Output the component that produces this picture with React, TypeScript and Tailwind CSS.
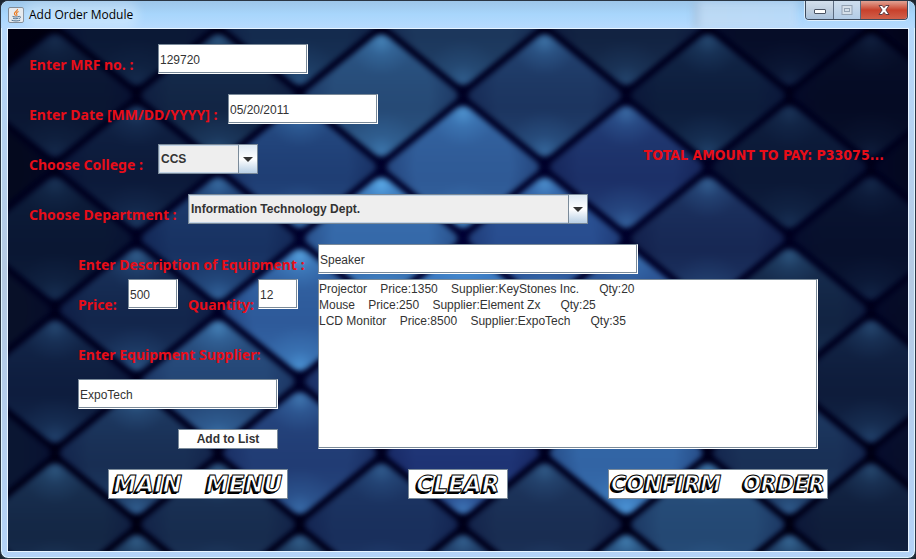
import type { InputHTMLAttributes, ReactNode, SelectHTMLAttributes } from "react";

type Tile = [col: number, row: number, fill: string, glow: number];

const STEP_X = 81.6;
const STEP_Y = 71.5;

const tiles: Tile[] = [
  [1, 0, "#0b1936", 0.12], [3, 0, "#142b4e", 0.3], [5, 0, "#1c375c", 0.35], [7, 0, "#122342", 0.25], [9, 0, "#060d28", 0.12], [11, 0, "#02041a", 0],
  [0, 1, "#0a1632", 0.12], [2, 1, "#122544", 0.3], [4, 1, "#264a76", 0.5], [6, 1, "#1c3560", 0.45], [8, 1, "#0d1d3c", 0.25], [10, 1, "#050b24", 0.1],
  [-1, 2, "#04091e", 0], [1, 2, "#0c1a3a", 0.2], [3, 2, "#1f3e74", 0.5], [5, 2, "#2f5a96", 0.6], [7, 2, "#1c3068", 0.4], [9, 2, "#0b1836", 0.15], [11, 2, "#030820", 0],
  [0, 3, "#0a1733", 0.15], [2, 3, "#183262", 0.4], [4, 3, "#3568a8", 0.85], [6, 3, "#284c8e", 0.6], [8, 3, "#172854", 0.35], [10, 3, "#07102c", 0.12],
  [-1, 4, "#081028", 0], [1, 4, "#13264c", 0.35], [3, 4, "#2e5a9a", 0.75], [5, 4, "#3a76be", 0.9], [7, 4, "#2a5090", 0.5], [9, 4, "#122443", 0.3], [11, 4, "#050b25", 0.1],
  [0, 5, "#0e1d3e", 0.25], [2, 5, "#244574", 0.5], [4, 5, "#213c74", 0.4], [6, 5, "#2a4f90", 0.6], [8, 5, "#193056", 0.3], [10, 5, "#0e1c3b", 0.25],
  [-1, 6, "#0a1632", 0], [1, 6, "#182e53", 0.4], [3, 6, "#213c74", 0.45], [5, 6, "#1e3374", 0.6], [7, 6, "#3264a4", 0.8], [9, 6, "#193056", 0.35], [11, 6, "#070e2a", 0.1],
  [0, 7, "#142745", 0.3], [2, 7, "#172c4e", 0.3], [4, 7, "#192f5c", 0.3], [6, 7, "#192d52", 0.3], [8, 7, "#244873", 0.4], [10, 7, "#0f1d3a", 0.25],
  [-1, 8, "#0c1730", 0.1], [1, 8, "#132542", 0.35], [3, 8, "#152848", 0.35], [5, 8, "#172b50", 0.35], [7, 8, "#1c3a60", 0.5], [9, 8, "#152a4a", 0.4], [11, 8, "#0a142e", 0.1],
];

const DIAMOND = "M-8 -59 Q0 -65 8 -59 L74 -6 Q80 0 74 6 L8 59 Q0 65 -8 59 L-74 6 Q-80 0 -74 -6 Z";

function QuiltedBackground() {
  return (
    <svg
      aria-hidden="true"
      className="absolute inset-0 h-full w-full"
      viewBox="8 29 900 522"
      preserveAspectRatio="xMidYMid slice"
    >
      <defs>
        <filter id="soft" x="-10%" y="-10%" width="120%" height="120%" colorInterpolationFilters="sRGB">
          <feGaussianBlur stdDeviation="2" />
        </filter>
        <radialGradient id="base" cx="50%" cy="45%" r="65%">
          <stop offset="0" stopColor="#02033c" />
          <stop offset="0.6" stopColor="#010220" />
          <stop offset="1" stopColor="#000010" />
        </radialGradient>
        <radialGradient id="shade" cx="0" cy="0" r="80" gradientUnits="userSpaceOnUse">
          <stop offset="0.6" stopColor="#020430" stopOpacity="0" />
          <stop offset="1" stopColor="#020430" stopOpacity="0.3" />
        </radialGradient>
        <radialGradient id="glint" cx="0" cy="-54" r="34" gradientUnits="userSpaceOnUse">
          <stop offset="0" stopColor="#6ac4ff" stopOpacity="0.8" />
          <stop offset="0.4" stopColor="#58aef0" stopOpacity="0.35" />
          <stop offset="1" stopColor="#4f9ee0" stopOpacity="0" />
        </radialGradient>
        <radialGradient id="glintLow" cx="0" cy="56" r="40" gradientUnits="userSpaceOnUse">
          <stop offset="0" stopColor="#5cb4f8" stopOpacity="0.7" />
          <stop offset="0.4" stopColor="#4f9ee0" stopOpacity="0.3" />
          <stop offset="1" stopColor="#4f9ee0" stopOpacity="0" />
        </radialGradient>
        <linearGradient id="sheen" x1="0" y1="0" x2="0" y2="1">
          <stop offset="0" stopColor="#4f9ee0" stopOpacity="0.35" />
          <stop offset="0.45" stopColor="#4288c8" stopOpacity="0.06" />
          <stop offset="0.6" stopColor="#4288c8" stopOpacity="0" />
          <stop offset="1" stopColor="#4a94d6" stopOpacity="0.4" />
        </linearGradient>
      </defs>
      <rect x="8" y="29" width="900" height="522" fill="url(#base)" />
      {tiles.map(([col, row, fill, glow]) => (
        <g key={`${col}-${row}`} transform={`translate(${55 + col * STEP_X} ${24 + row * STEP_Y})`}>
          <g filter="url(#soft)">
            <path d={DIAMOND} fill={fill} />
            <path d={DIAMOND} fill="url(#shade)" />
            <path d={DIAMOND} fill="url(#sheen)" opacity={glow} />
            <path d={DIAMOND} fill="url(#glint)" opacity={glow} />
            <path d={DIAMOND} fill="url(#glintLow)" opacity={glow} />
            <path d={DIAMOND} fill="none" stroke="#010326" strokeWidth="6" strokeOpacity="0.35" />
          </g>
        </g>
      ))}
    </svg>
  );
}

function JavaIcon() {
  return (
    <svg aria-hidden="true" className="size-4" viewBox="0 0 16 16" fill="none">
      <rect x="0.5" y="0.5" width="15" height="15" rx="1.5" fill="#e6eaee" stroke="#7f8b98" />
      <path d="M9.5 2C10 4 6.2 4.8 6.4 6.6c.1 1 1.2 1.4 1.2 2.2M10.6 4.6C8.6 5.4 8 6.2 8.8 7.2c.5.7.2 1.2-.3 1.7" stroke="#e8761a" strokeWidth="1.1" />
      <path d="M4.500 9.400c1.600.8 5 .8 6.600 0M5 11.200c1.500.7 4 .7 5.400 0M3.600 13.200c2.500 1 6.500 1 8.600 0M11.200 9.400c1.800-.3 1.800 1.600-.3 2.200" stroke="#4b6f90" strokeWidth="1" />
    </svg>
  );
}

function TitleBar() {
  const button = "flex h-[18px] items-center justify-center";
  return (
    <header className="flex h-[27px] items-start overflow-hidden rounded-t-lg bg-linear-to-b from-[#9dc6ea] via-[#a8d6fc] to-[#b6dafe] px-[7px]">
      <div className="flex h-[27px] flex-1 items-center gap-[5px]">
        <JavaIcon />
        <h1 className="rounded-full bg-white/25 font-['Open_Sans','Noto_Sans',sans-serif] text-xs leading-4 text-black shadow-[0_0_10px_6px_rgba(255,255,255,0.25)]">
          Add Order Module
        </h1>
      </div>
      <div className="mr-2 h-[27px] w-[104px] bg-linear-to-r from-[#9fb4cd] via-[#c9dcf0] via-10% to-[#c3dcf6] opacity-60 blur-[3px]" />
      <div className="flex overflow-hidden rounded-b border border-t-0 border-[#3d4a5c] shadow-[0_0_0_1px_rgba(255,255,255,0.6)]">
        <button type="button" aria-label="Minimize" className={`${button} w-7 border-r border-[#5b6b80] bg-linear-to-b from-[#d3dfec] via-[#c0cfdf] to-[#a9c2dc]`}>
          <svg className="h-3 w-3" viewBox="0 0 12 12"><rect x="0.5" y="5.500" width="11" height="4" rx="0.5" fill="#fff" stroke="#4a5362" /></svg>
        </button>
        <button type="button" aria-label="Maximize" disabled className={`${button} w-[27px] border-r border-[#5b6b80] bg-linear-to-b from-[#cfdeed] to-[#b3cce6]`}>
          <svg className="h-3 w-3" viewBox="0 0 12 12" fill="none"><rect x="1" y="1.500" width="10" height="9" fill="#d5dfe9" stroke="#93a2b3" /><rect x="3.500" y="4.500" width="5" height="3" stroke="#93a2b3" /></svg>
        </button>
        <button type="button" aria-label="Close" className={`${button} w-[46px] bg-linear-to-b from-[#e0a294] via-[#c8402b] to-[#d0604a]`}>
          <svg className="h-3 w-4" viewBox="0 0 16 12"><path d="M3 1.500h3.200L8 3.700l1.800-2.200H13L9.900 6l3.100 4.500H9.800L8 8.300l-1.800 2.200H3L6.100 6z" fill="#fff" stroke="#50323a" strokeWidth="0.9" /></svg>
        </button>
      </div>
    </header>
  );
}

const bevel =
  "rounded-none border border-t-[#7a8a99] border-l-[#7a8a99] border-r-white border-b-white bg-white text-xs font-normal text-[#333] shadow-[inset_-1px_-1px_0_#7a8a99] outline-none font-['Liberation_Sans',Arial,sans-serif]";

function Label({ htmlFor, className, children }: { htmlFor: string; className: string; children: ReactNode }) {
  return (
    <label htmlFor={htmlFor} className={`shrink-0 self-end whitespace-nowrap leading-[18px] ${className}`}>
      {children}
    </label>
  );
}

function TextField({ className, ...props }: InputHTMLAttributes<HTMLInputElement>) {
  return <input type="text" className={`${bevel} block h-[30px] px-px pt-px ${className}`} {...props} />;
}

function ComboBox({ className, ...props }: SelectHTMLAttributes<HTMLSelectElement>) {
  return (
    <div className={`grid h-[30px] grid-cols-[1fr_20px] ${className}`}>
      <select
        className="col-span-2 col-start-1 row-start-1 h-[30px] appearance-none rounded-none border border-[#7a8a99] bg-[#eee] pl-[2px] font-['Liberation_Sans',Arial,sans-serif] text-xs font-bold text-[#333] shadow-[inset_0_0_0_1px_#c3d4e6] outline-none"
        {...props}
      />
      <span className="pointer-events-none col-start-2 row-start-1 flex items-center justify-center border border-[#7a8a99] bg-linear-to-b from-[#dde8f3] via-white to-[#b8cfe5]">
        <svg aria-hidden="true" className="h-[5px] w-[10px]" viewBox="0 0 10 5"><path d="M0 0h10L5 5z" fill="#333" /></svg>
      </span>
    </div>
  );
}

function ImageButton({ className, children }: { className: string; children: string }) {
  return (
    <button
      type="button"
      className={`h-[30px] overflow-hidden whitespace-pre border border-[#7a8a99] bg-white text-center font-['DejaVu_Sans',sans-serif] leading-[26px] font-bold text-white italic [-webkit-text-stroke:1px_#000] [text-shadow:-1px_1px_0_#000,-2px_2px_0_#000] ${className}`}
    >
      {children}
    </button>
  );
}

const orderList = [
  "Projector    Price:1350    Supplier:KeyStones Inc.      Qty:20",
  "Mouse    Price:250    Supplier:Element Zx      Qty:25",
  "LCD Monitor    Price:8500    Supplier:ExpoTech      Qty:35",
].join("\n");

export default function App() {
  return (
    <div className="flex min-h-screen flex-col bg-[#1c2530]">
      <div className="flex flex-1 flex-col rounded-lg border border-[#2a3644] bg-linear-to-b from-[#b6dafe] via-[#b4c9e2] to-[#b4d3f8] shadow-[inset_0_0_0_1px_#dff4ff]">
        <TitleBar />
        <main className="relative mx-[6px] mb-[6px] flex flex-1 border border-[#e8f4ff]">
          <QuiltedBackground />
          <form
            className="relative flex flex-1 flex-col gap-5 pt-[15px] pr-6 pl-[21px] font-['Noto_Sans',sans-serif] text-sm font-bold text-[#e80d18]"
            onSubmit={(event) => event.preventDefault()}
          >
            <div className="flex h-[30px]">
              <Label htmlFor="mrf" className="w-[129px]">Enter MRF no. :</Label>
              <TextField id="mrf" className="w-[150px]" defaultValue="129720" />
            </div>
            <div className="flex h-[30px]">
              <Label htmlFor="date" className="w-[199px]">Enter Date [MM/DD/YYYY] :</Label>
              <TextField id="date" className="w-[150px]" defaultValue="05/20/2011" />
            </div>
            <div className="flex h-[30px]">
              <Label htmlFor="college" className="w-[129px]">Choose College :</Label>
              <ComboBox id="college" className="w-[100px]" defaultValue="CCS">
                <option>CCS</option>
              </ComboBox>
              <output className="ml-auto font-['DejaVu_Sans_Condensed','DejaVu_Sans',sans-serif] leading-[22px]">TOTAL AMOUNT TO PAY: P33075...</output>
            </div>
            <div className="flex h-[30px]">
              <Label htmlFor="department" className="w-[159px]">Choose Department :</Label>
              <ComboBox id="department" className="w-[400px]" defaultValue="Information Technology Dept.">
                <option>Information Technology Dept.</option>
              </ComboBox>
            </div>
            <div className="mr-[66px] ml-[49px] flex flex-col gap-[5px]">
              <div className="flex h-[30px]">
                <Label htmlFor="description" className="w-[240px]">Enter Description of Equipment :</Label>
                <TextField id="description" className="w-[320px]" defaultValue="Speaker" />
              </div>
              <div className="flex">
                <div className="w-[240px] shrink-0">
                  <div className="flex h-[35px]">
                    <Label htmlFor="price" className="w-[50px]">Price:</Label>
                    <TextField id="price" className="w-[50px]" defaultValue="500" />
                    <Label htmlFor="quantity" className="w-20 pl-[10px]">Quantity:</Label>
                    <TextField id="quantity" className="w-10" defaultValue="12" />
                  </div>
                  <div className="mt-8 flex w-[200px] flex-col">
                    <label htmlFor="supplier" className="leading-[18px]">Enter Equipment Supplier:</label>
                    <TextField id="supplier" className="mt-[15px] w-full" defaultValue="ExpoTech" />
                    <button
                      type="button"
                      className="mt-5 h-5 w-[100px] self-end border border-[#7a8a99] bg-white font-['Liberation_Sans',Arial,sans-serif] text-xs leading-[18px] font-bold text-[#333]"
                    >
                      Add to List
                    </button>
                  </div>
                </div>
                <textarea
                  aria-label="Order list"
                  readOnly
                  className={`${bevel} block h-[170px] min-w-0 flex-1 resize-none overflow-hidden p-0 pt-px leading-4 whitespace-pre`}
                  value={orderList}
                />
              </div>
            </div>
            <div className="ml-[79px] flex pb-5">
              <ImageButton className="w-[180px] text-[23px]">{"MAIN   MENU"}</ImageButton>
              <ImageButton className="ml-[120px] w-[100px] text-[23px]">CLEAR</ImageButton>
              <ImageButton className="ml-[100px] w-[220px] text-[21px]">{"CONFIRM   ORDER"}</ImageButton>
            </div>
          </form>
        </main>
      </div>
    </div>
  );
}
